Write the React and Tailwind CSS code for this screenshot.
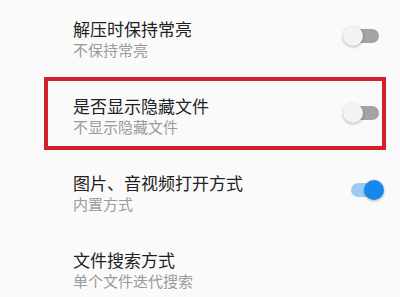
function Toggle({ on }) {
  return (
    <div className="relative mb-[6px] h-5 w-[41px] shrink-0">
      <div
        className={
          on
            ? "absolute left-[8px] top-[3px] h-[14px] w-[28px] rounded-full bg-[#9ccbf5]"
            : "absolute left-[8px] top-[3px] h-[14px] w-[28px] rounded-full bg-[#a3a3a3]"
        }
      />
      <div
        className={
          on
            ? "absolute right-0 top-0 h-5 w-5 rounded-full bg-[#1688ec] shadow-[0_1px_3px_rgba(0,0,0,0.3)]"
            : "absolute left-0 top-0 h-5 w-5 rounded-full bg-[#f3f3f3] shadow-[0_1px_3px_rgba(0,0,0,0.3)]"
        }
      />
    </div>
  );
}

function SettingRow({ title, desc, toggle, on, boxed }) {
  return (
    <div className="relative flex h-[77px] items-center pl-[73px] pr-4">
      <div className="flex-1">
        <div className="text-[17px] leading-[22px] text-[#222]">{title}</div>
        <div className="text-[15px] leading-[20px] text-[#9a9a9a]">{desc}</div>
      </div>
      {toggle && <Toggle on={on} />}
      {boxed && (
        <div className="absolute left-[44px] top-0 h-[73px] w-[342px] border-[4px] border-[#d3202b]" />
      )}
    </div>
  );
}

export default function App() {
  return (
    <div
      className="h-[297px] w-[400px] overflow-hidden bg-[#fafafa] pt-[0px]"
      style={{ fontFamily: '"Noto Sans CJK SC", "Noto Sans", sans-serif' }}
    >
      <SettingRow title="解压时保持常亮" desc="不保持常亮" toggle />
      <SettingRow title="是否显示隐藏文件" desc="不显示隐藏文件" toggle boxed />
      <SettingRow title="图片、音视频打开方式" desc="内置方式" toggle on />
      <SettingRow title="文件搜索方式" desc="单个文件迭代搜索" />
    </div>
  );
}
